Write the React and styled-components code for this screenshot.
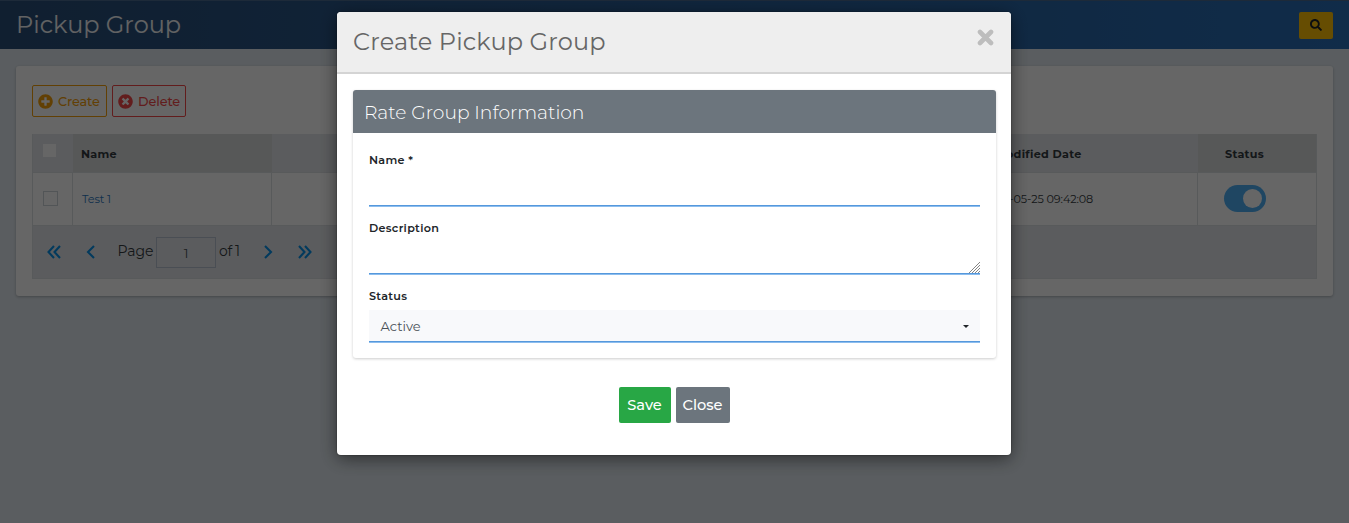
import React from "react";
import styled, { createGlobalStyle } from "styled-components";
import { FaPlusCircle, FaTimesCircle, FaSearch } from "react-icons/fa";

const GlobalStyle = createGlobalStyle`
  *, *::before, *::after { box-sizing: border-box; }
  html, body { margin: 0; height: 100%; overflow: hidden; }
  body {
    font-family: Montserrat, Inter, "Liberation Sans", sans-serif;
    font-size: 13px;
    color: #343a40;
    background: #e1e9f0;
  }
  button, input, textarea { font-family: inherit; margin: 0; }
`;

const Page = styled.div`
  height: 523px;
  overflow: hidden;
`;

const TopBar = styled.header`
  display: flex;
  align-items: center;
  justify-content: space-between;
  height: 49px;
  padding: 0 16px;
  border-top: 1px solid #4a6a8e;
  background: linear-gradient(90deg, #2a4e78, #286eb7);
`;

const PageTitle = styled.h1`
  margin: 0;
  font-size: 24px;
  font-weight: 400;
  line-height: 48px;
  color: #f4f6f8;
`;

const SearchButton = styled.button`
  display: flex;
  align-items: center;
  justify-content: center;
  width: 34px;
  height: 27px;
  padding: 0;
  border: 0;
  border-radius: 2px;
  background: #ffc107;
  color: #212529;
  font-size: 12px;
`;

const Card = styled.main`
  height: 230px;
  margin: 17px 16px 0;
  padding: 19px 16px 0;
  border-radius: 3px;
  background: #fff;
  box-shadow: 0 1px 3px rgba(0, 0, 0, 0.25);
`;

const Toolbar = styled.div`
  display: flex;
  gap: 5px;
  margin-bottom: 17px;
`;

const OutlineButton = styled.button`
  display: flex;
  align-items: center;
  gap: 5px;
  width: ${(p) => p.$width}px;
  height: 32px;
  padding: 0 0 0 5px;
  border: 1px solid ${(p) => p.$color};
  border-radius: 2px;
  background: transparent;
  color: ${(p) => p.$color};
  font-size: 12.8px;
  font-weight: 500;
  letter-spacing: -0.1px;
  svg { flex: none; font-size: 15px; }
`;

const Table = styled.div`
  border: 1px solid #dde0e4;
  border-top: 0;
`;

const Row = styled.div`
  display: grid;
  grid-template-columns: 40px 199px 1fr 225px 118px;
  height: ${(p) => (p.$head ? 39 : 53)}px;
  background: ${(p) => (p.$head ? "#e4e7eb" : "#fff")};
  font-size: 11.2px;
  border-bottom: 1px solid #dde0e4;
`;

const HeadCell = styled.div`
  display: flex;
  align-items: center;
  padding-left: ${(p) => p.$pad ?? 8}px;
  padding-top: 2px;
  font-weight: 700;
  letter-spacing: 0.3px;
  background: ${(p) => (p.$shade ? "#dadbdd" : "transparent")};
`;

const Cell = styled.div`
  display: flex;
  align-items: center;
  padding-left: ${(p) => p.$pad ?? 9}px;
  border-right: 1px solid #dde0e4;
  color: ${(p) => (p.$link ? "#2b78c0" : "#343a40")};
  letter-spacing: -0.08px;
  &:last-child { border-right: 0; }
`;

const Check = styled.span`
  width: ${(p) => (p.$head ? 13 : 15)}px;
  height: ${(p) => (p.$head ? 13 : 15)}px;
  margin-bottom: ${(p) => (p.$head ? 7 : 2)}px;
  border: 1px solid ${(p) => (p.$head ? "#fff" : "#ced4da")};
  background: #fff;
`;

const Switch = styled.span`
  display: flex;
  justify-content: flex-end;
  width: 42px;
  height: 27px;
  padding: 4px;
  margin-bottom: 2px;
  border-radius: 14px;
  background: #4fb0f5;
  &::after {
    content: "";
    width: 19px;
    height: 19px;
    border-radius: 50%;
    background: #fff;
  }
`;

const Pager = styled.div`
  display: flex;
  align-items: center;
  height: 52px;
  padding-left: 12.5px;
  background: #e4e7eb;
  font-size: 14px;
`;

const Arrows = styled.svg`
  width: 16px;
  height: 16px;
  margin-left: ${(p) => p.$left}px;
  fill: none;
  stroke: #0791e8;
  stroke-width: 2.1;
`;

const PagerText = styled.span`
  margin-left: ${(p) => p.$left}px;
  padding-bottom: 2px;
  width: ${(p) => p.$width}px;
  white-space: nowrap;
  letter-spacing: ${(p) => p.$spacing}px;
`;

const PageNumber = styled.span`
  display: flex;
  align-items: center;
  justify-content: center;
  width: 60px;
  height: 31px;
  margin-left: 3.5px;
  padding-top: 2px;
  border: 1px solid #b8c4d3;
  color: #495057;
  font-size: 13px;
`;

const Backdrop = styled.div`
  position: fixed;
  inset: 0;
  display: flex;
  justify-content: center;
  align-items: flex-start;
  padding: 12px 1px 0 0;
  background: rgba(0, 0, 0, 0.6);
`;

const Dialog = styled.section`
  width: 674px;
  height: 443px;
  overflow: hidden;
  border-radius: 4px;
  background: #fff;
`;

const DialogShadow = styled.div`
  border-radius: 4px;
  box-shadow: 0 4px 18px rgba(0, 0, 0, 0.5), 0 0 2px rgba(0, 0, 0, 0.5);
`;

const DialogHeader = styled.div`
  display: flex;
  justify-content: space-between;
  height: 62px;
  padding: 0 17px 0 16px;
  border-bottom: 2px solid #d4d4d4;
  background: #eee;
`;

const DialogTitle = styled.h2`
  margin: 0;
  font-size: 24px;
  font-weight: 400;
  line-height: 60px;
  letter-spacing: 0.15px;
  color: #666;
`;

const CloseIcon = styled.svg`
  width: 17px;
  height: 17px;
  margin-top: 17px;
  stroke: #bdbdbd;
  stroke-width: 4.6;
  stroke-linecap: round;
`;

const Panel = styled.div`
  height: 268px;
  margin: 16px 15px 29px 16px;
  border-radius: 3px;
  box-shadow: 0 1px 3px rgba(0, 0, 0, 0.2);
`;

const PanelTitle = styled.h3`
  height: 43px;
  margin: 0;
  padding-left: 11px;
  border-radius: 3px 3px 0 0;
  background: #6c757d;
  color: #fff;
  font-size: 18.7px;
  font-weight: 300;
  line-height: 45px;
`;

const Fields = styled.div`
  display: flex;
  flex-direction: column;
  padding: 18px 16px 0;
`;

const Field = styled.div`
  height: 68px;
`;

const Label = styled.label`
  display: block;
  height: 18px;
  color: #212529;
  font-size: 11.2px;
  font-weight: 600;
  line-height: 18px;
  letter-spacing: 0.3px;
`;

const Underlined = styled.div`
  display: flex;
  align-items: ${(p) => (p.$area ? "flex-end" : "center")};
  justify-content: ${(p) => (p.$area ? "flex-end" : "space-between")};
  height: ${(p) => (p.$select ? 33 : 32)}px;
  margin-top: ${(p) => (p.$select ? 5 : 6)}px;
  padding: ${(p) => (p.$select ? "0 11px 0 11.5px" : "0")};
  border-bottom: 1px solid #8cbdee;
  box-shadow: inset 0 -1px 0 #5598dc;
  background: ${(p) => (p.$select ? "#f8f9fb" : "#fff")};
  color: #495057;
  font-size: 13px;
`;

const Grip = styled.svg`
  width: 12px;
  height: 12px;
  margin-bottom: 1px;
  stroke: #777;
  stroke-width: 0.9;
`;

const Caret = styled.span`
  border: 3.5px solid transparent;
  border-top-color: #212529;
  border-bottom: 0;
`;

const Actions = styled.div`
  display: flex;
  justify-content: center;
  gap: 5px;
`;

const ActionButton = styled.button`
  width: ${(p) => p.$width}px;
  height: 36px;
  padding: 0;
  border: 0;
  border-radius: 2px;
  background: ${(p) => p.$bg};
  color: #fff;
  font-size: 14.6px;
  font-weight: 500;
`;

export default function App() {
  return (
    <>
      <GlobalStyle />
      <Page>
        <TopBar>
          <PageTitle>Pickup Group</PageTitle>
          <SearchButton aria-label="Search"><FaSearch /></SearchButton>
        </TopBar>
        <Card>
          <Toolbar>
            <OutlineButton $width={75} $color="#f5a00c"><FaPlusCircle />Create</OutlineButton>
            <OutlineButton $width={74} $color="#f44a4a"><FaTimesCircle />Delete</OutlineButton>
          </Toolbar>
          <Table>
            <Row $head>
              <HeadCell $pad={10}><Check $head /></HeadCell>
              <HeadCell $shade>Name</HeadCell>
              <HeadCell />
              <HeadCell $pad={22}>Modified Date</HeadCell>
              <HeadCell $shade $pad={27}>Status</HeadCell>
            </Row>
            <Row>
              <Cell $pad={10}><Check /></Cell>
              <Cell $link>Test 1</Cell>
              <Cell />
              <Cell>2020-05-25 09:42:08</Cell>
              <Cell $pad={26}><Switch /></Cell>
            </Row>
            <Pager>
              <Arrows $left={0} viewBox="0 0 16 16"><path d="M8 2 2.5 8 8 14M14 2 8.5 8 14 14" /></Arrows>
              <Arrows $left={20} viewBox="0 0 16 16"><path d="M12 2 6 8l6 6" /></Arrows>
              <PagerText $left={20} $width={35} $spacing={-0.1}>Page</PagerText>
              <PageNumber>1</PageNumber>
              <PagerText $left={3} $width={22} $spacing={-0.4}>of 1</PagerText>
              <Arrows $left={19} viewBox="0 0 16 16"><path d="m5 2 6 6-6 6" /></Arrows>
              <Arrows $left={21} viewBox="0 0 16 16"><path d="m2 2 5.5 6L2 14M8 2l5.5 6L8 14" /></Arrows>
            </Pager>
          </Table>
        </Card>
      </Page>
      <Backdrop>
        <DialogShadow>
          <Dialog role="dialog">
            <DialogHeader>
              <DialogTitle>Create Pickup Group</DialogTitle>
              <CloseIcon viewBox="0 0 17 17"><path d="m3 3 11 11M14 3 3 14" /></CloseIcon>
            </DialogHeader>
            <Panel>
              <PanelTitle>Rate Group Information</PanelTitle>
              <Fields>
                <Field>
                  <Label>Name *</Label>
                  <Underlined />
                </Field>
                <Field>
                  <Label>Description</Label>
                  <Underlined $area>
                    <Grip viewBox="0 0 12 12"><path d="M1 12 12 1M4 12l8-8M7 12l5-5M10 12l2-2" /></Grip>
                  </Underlined>
                </Field>
                <Field>
                  <Label>Status</Label>
                  <Underlined $select>Active<Caret /></Underlined>
                </Field>
              </Fields>
            </Panel>
            <Actions>
              <ActionButton $width={52} $bg="#28a745">Save</ActionButton>
              <ActionButton $width={54} $bg="#6c757d">Close</ActionButton>
            </Actions>
          </Dialog>
        </DialogShadow>
      </Backdrop>
    </>
  );
}
